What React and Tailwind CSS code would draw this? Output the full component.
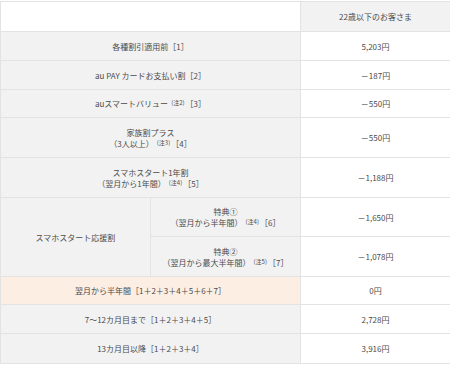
import React from "react"

const cell = "border border-[#e3e3e3] text-center align-middle px-1"
const label = `${cell} bg-[#f2f2f2]`
const value = `${cell} bg-white`

function Note({ n }) {
  return <span className="relative -top-[2px] text-[6px] leading-none ml-[3px] mr-[1px]">(注{n})</span>
}

const SIMPLE = [
  { h: "h-[29px]", text: "各種割引適用前［1］", price: "5,203円" },
  { h: "h-[29px]", text: "au PAY カードお支払い割［2］", price: "－187円" },
]

const TOTALS = [
  { h: "h-[29px]", text: "7～12カ月目まで［1＋2＋3＋4＋5］", price: "2,728円" },
  { h: "h-[30px]", text: "13カ月目以降［1＋2＋3＋4］", price: "3,916円" },
]

export default function App() {
  return (
    <div className="w-[450px] h-[366px] bg-white pt-px text-[#4a4a4a] text-[8px] leading-[11px]"
      style={{ fontFamily: "'Noto Sans CJK JP', 'Noto Sans', sans-serif" }}>
      <table className="w-[450px] table-fixed border-collapse">
        <colgroup>
          <col className="w-[150px]" />
          <col className="w-[150px]" />
          <col className="w-[150px]" />
        </colgroup>
        <tbody>
          <tr className="h-[30px]">
            <td colSpan={2} className={`${cell} bg-white`}></td>
            <td className={label}>22歳以下のお客さま</td>
          </tr>
          {SIMPLE.map(r => (
            <tr key={r.text} className={r.h}>
              <td colSpan={2} className={label}>{r.text}</td>
              <td className={value}>{r.price}</td>
            </tr>
          ))}
          <tr className="h-[28px]">
            <td colSpan={2} className={label}>auスマートバリュー<Note n="2" />［3］</td>
            <td className={value}>－550円</td>
          </tr>
          <tr className="h-[40px]">
            <td colSpan={2} className={label}>
              家族割プラス<br />（3人以上）<Note n="3" />［4］
            </td>
            <td className={value}>－550円</td>
          </tr>
          <tr className="h-[40px]">
            <td colSpan={2} className={label}>
              スマホスタート1年割<br />（翌月から1年間）<Note n="4" />［5］
            </td>
            <td className={value}>－1,188円</td>
          </tr>
          <tr className="h-[39px]">
            <td rowSpan={2} className={label}>スマホスタート応援割</td>
            <td className={label}>
              特典①<br />（翌月から半年間）<Note n="4" />［6］
            </td>
            <td className={value}>－1,650円</td>
          </tr>
          <tr className="h-[40px]">
            <td className={label}>
              特典②<br />（翌月から最大半年間）<Note n="5" />［7］
            </td>
            <td className={value}>－1,078円</td>
          </tr>
          <tr className="h-[28px]">
            <td colSpan={2} className={`${cell} bg-[#fdeee4]`}>翌月から半年間［1＋2＋3＋4＋5＋6＋7］</td>
            <td className={value}>0円</td>
          </tr>
          {TOTALS.map(r => (
            <tr key={r.text} className={r.h}>
              <td colSpan={2} className={label}>{r.text}</td>
              <td className={value}>{r.price}</td>
            </tr>
          ))}
        </tbody>
      </table>
    </div>
  )
}
